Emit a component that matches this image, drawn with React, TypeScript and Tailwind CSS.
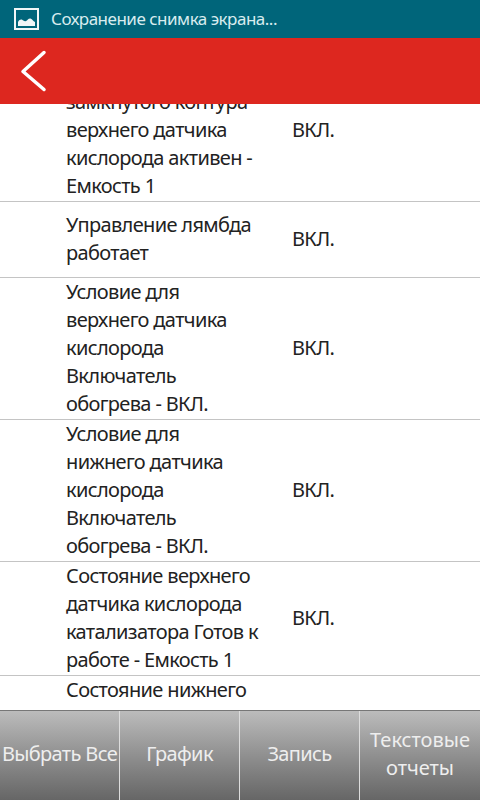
const rows = [
  { text: ["Состояние", "замкнутого контура", "верхнего датчика", "кислорода активен -", "Емкость 1"], value: "ВКЛ." },
  { text: ["Управление лямбда", "работает"], value: "ВКЛ." },
  { text: ["Условие для", "верхнего датчика", "кислорода", "Включатель", "обогрева - ВКЛ."], value: "ВКЛ." },
  { text: ["Условие для", "нижнего датчика", "кислорода", "Включатель", "обогрева - ВКЛ."], value: "ВКЛ." },
  { text: ["Состояние верхнего", "датчика кислорода", "катализатора Готов к", "работе - Емкость 1"], value: "ВКЛ." },
  { text: ["Состояние нижнего"], value: "" },
];

const buttons = [["Выбрать Все"], ["График"], ["Запись"], ["Текстовые", "отчеты"]];

export default function App() {
  return (
    <div className="flex h-[800px] w-[480px] flex-col overflow-hidden bg-white font-['Noto_Sans',sans-serif] text-[20px] leading-[28px] tracking-[-0.65px] text-[#222]">
      <div className="flex h-[38px] shrink-0 items-center gap-[12px] bg-[#00657a] pl-[14px] text-[17px] tracking-[-0.5px] text-[#d8ecef]">
        <svg width="25" height="22" viewBox="0 0 25 22" fill="none">
          <rect x="1" y="1" width="23" height="20" stroke="#f0f6f7" strokeWidth="2" />
          <path d="M4 18v-4c1.500-2.500 3-3 4.500-2 1.500 1 2 1.500 3.500 1 1.500-.5 2.500-3 4.500-2.500 2 .5 2.500 3 4.500 3.500v4z" fill="#f0f6f7" />
        </svg>
        <span>Сохранение снимка экрана...</span>
      </div>
      <div className="relative z-10 flex h-[66px] shrink-0 items-center bg-[#dd271f] pl-[20px]">
        <svg width="28" height="42" viewBox="0 0 28 42" fill="none">
          <path d="M24 2.500 3 21.500l21 18" stroke="#fff" strokeWidth="3.500" strokeLinecap="round" strokeLinejoin="round" />
        </svg>
      </div>
      <div className="min-h-0 flex-1 overflow-hidden">
        <div className="-mt-[44px]">
          {rows.map((row, i) => (
            <div key={i} className="flex min-h-[76px] items-center border-b border-[#c4c4c4] pl-[66px] pt-px last:items-start">
              <div className="-mt-px mb-px w-[226px] shrink-0">
                {row.text.map((line) => (
                  <div key={line} className="whitespace-nowrap">{line}</div>
                ))}
              </div>
              <div className="-mt-px mb-px">{row.value}</div>
            </div>
          ))}
        </div>
      </div>
      <div className="grid h-[90px] shrink-0 grid-cols-4 border-t border-[#777] bg-gradient-to-b from-[#bcbcbc] to-[#666]">
        {buttons.map((lines, i) => (
          <div key={i} className="flex min-w-0 flex-col items-center justify-center border-r border-[#ddd] pb-[3px] text-[#eee] last:border-r-0 last:tracking-normal">
            {lines.map((line) => (
              <div key={line} className="whitespace-nowrap">{line}</div>
            ))}
          </div>
        ))}
      </div>
    </div>
  );
}
